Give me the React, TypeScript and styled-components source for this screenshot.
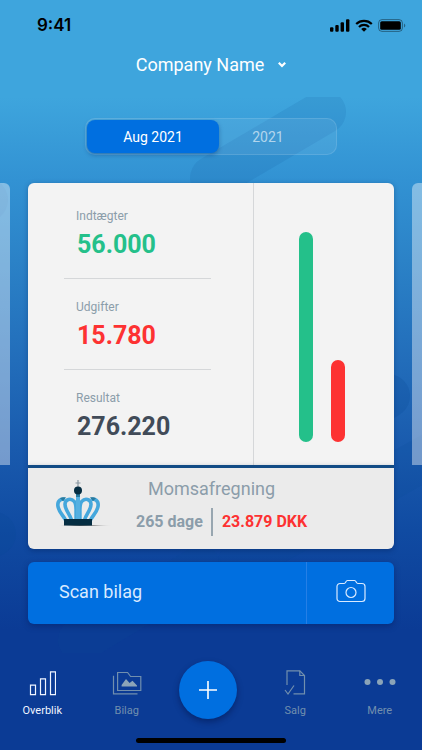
import React, { useState } from 'react';
import styled, { createGlobalStyle } from 'styled-components';

const colors = {
  sky: '#3ea5dd',
  navy: '#0b3b95',
  action: '#006fe0',
  green: '#24c08a',
  red: '#fd3232',
  ink: '#414b58',
  muted: '#8b9daa',
  paper: '#f3f3f3',
};

const GlobalStyle = createGlobalStyle`
  * { box-sizing: border-box; }
  body { margin: 0; background: ${colors.navy}; font-family: Roboto, "Liberation Sans", sans-serif; }
  button { font: inherit; color: inherit; border: 0; padding: 0; background: none; cursor: pointer; }
  a { color: inherit; text-decoration: none; }
  svg { display: block; }
  h2, p, dl, dt, dd { margin: 0; }
`;

const Screen = styled.div`
  position: relative;
  isolation: isolate;
  min-height: 100vh;
  display: flex;
  flex-direction: column;
  overflow: hidden;
  background: linear-gradient(180deg, ${colors.sky} 97px, #3292d3 180px, #2b82c7 260px, #226dba 360px, #195aad 450px, #104ba2 530px, ${colors.navy} 630px);
`;

const Backdrop = styled.svg`
  position: absolute;
  z-index: -1;
  top: 97px;
  left: 0;
  width: 100%;
  height: 556px;
`;

const StatusBar = styled.div`
  display: flex;
  align-items: center;
  justify-content: space-between;
  height: 50px;
  padding: 0 16px 0 37px;
  color: #000;
`;

const Clock = styled.time`
  font: 600 17px/20px Inter, "Liberation Sans", sans-serif;
`;

const StatusIcons = styled.div`
  display: flex;
  align-items: center;
  gap: 5px;
`;

const Header = styled.header`
  display: flex;
  justify-content: center;
  height: 47px;
`;

const CompanyButton = styled.button`
  display: flex;
  align-items: center;
  gap: 14px;
  height: 28px;
  color: #fff;
  font-size: 18px;
`;

const Segments = styled.div`
  align-self: center;
  display: flex;
  width: 252px;
  height: 37px;
  margin: 21px 0 28px;
  border: 1px solid rgba(255, 255, 255, 0.12);
  border-radius: 10px;
  background: rgba(255, 255, 255, 0.07);
`;

const Segment = styled.button<{ $active: boolean }>`
  flex: ${(p) => (p.$active ? '0 0 132px' : '1')};
  margin: 1px;
  padding-right: ${(p) => (p.$active ? '0' : '20px')};
  border-radius: 8px;
  font-size: 14px;
  color: ${(p) => (p.$active ? '#fff' : 'rgba(255,255,255,0.6)')};
  background: ${(p) => (p.$active ? colors.action : 'transparent')};
  box-shadow: ${(p) => (p.$active ? '0 2px 4px rgba(10, 50, 110, 0.4)' : 'none')};
`;

const Carousel = styled.main`
  display: grid;
  grid-template-columns: 10px minmax(0, 1fr) 10px;
  column-gap: 18px;
`;

const Peek = styled.div<{ $side: 'left' | 'right' }>`
  background: rgba(255, 255, 255, 0.4);
  border-radius: ${(p) => (p.$side === 'left' ? '0 6px 0 0' : '6px 0 0 0')};
`;

const Summary = styled.section`
  display: grid;
  grid-template-columns: minmax(0, 226fr) minmax(0, 140fr);
  background: ${colors.paper};
  border-radius: 6px 6px 0 0;
  box-shadow: 0 1px 5px rgba(5, 35, 90, 0.35);
`;

const Metrics = styled.dl`
  padding: 5px 42px 5px 36px;
  border-right: 1px solid #d5d7d9;
`;

const Metric = styled.div`
  display: grid;
  gap: 5px;
  padding: 19px 12px 18px;
  &:not(:last-child) { border-bottom: 1px solid #d5d7d9; }
`;

const MetricLabel = styled.dt`
  font-size: 12px;
  line-height: 18px;
  color: ${colors.muted};
`;

const MetricValue = styled.dd<{ $color: string }>`
  padding-left: 1px;
  font-size: 25px;
  line-height: 30px;
  font-weight: 700;
  color: ${(p) => p.$color};
`;

const Chart = styled.div`
  display: flex;
  align-items: flex-end;
  justify-content: center;
  gap: 18px;
  padding: 0 4px 23px 0;
`;

const Bar = styled.div<{ $color: string }>`
  width: 14px;
  border-radius: 7px;
  background: ${(p) => p.$color};
`;

const VatPanel = styled.section`
  grid-column: 2;
  display: grid;
  grid-template-columns: 86px auto 1fr;
  align-items: start;
  column-gap: 22px;
  height: 84px;
  padding-top: 8px;
  border-top: 3px solid #124b85;
  border-radius: 0 0 6px 6px;
  background: #ebebeb;
  box-shadow: 0 2px 5px rgba(5, 35, 90, 0.4);
`;

const CrownBox = styled.div`
  padding: 4px 0 0 26px;
`;

const VatText = styled.div`
  display: flex;
  flex-direction: column;
`;

const VatTitle = styled.h2`
  padding-left: 12px;
  font-size: 18px;
  line-height: 26px;
  font-weight: 400;
  color: ${colors.muted};
`;

const VatFigures = styled.p`
  display: flex;
  align-items: center;
  margin-top: 6px;
  font-size: 16px;
  font-weight: 700;
  line-height: 28px;
  color: ${colors.muted};
`;

const VatAmount = styled.span`
  margin-left: 8px;
  padding-left: 9px;
  border-left: 2px solid #98a6b0;
  color: ${colors.red};
`;

const ScanBar = styled.button`
  display: grid;
  grid-template-columns: minmax(0, 278fr) minmax(0, 88fr);
  align-items: stretch;
  height: 62px;
  margin: 13px 28px 0;
  border-radius: 6px;
  background: ${colors.action};
  box-shadow: 0 2px 6px rgba(2, 20, 80, 0.4);
  color: #d9eaff;
`;

const ScanLabel = styled.span`
  padding-left: 31px;
  font-size: 18px;
  line-height: 60px;
  text-align: left;
`;

const ScanIcon = styled.span`
  display: grid;
  place-items: center;
  padding-bottom: 4px;
  border-left: 1px solid #257fe6;
`;

const TabBar = styled.nav`
  display: flex;
  align-items: stretch;
  margin-top: auto;
  padding: 24px 0 19px;
`;

const TabPair = styled.div`
  flex: 1;
  display: grid;
  grid-template-columns: 1fr 1fr;
`;

const Tab = styled.a<{ $active?: boolean }>`
  display: flex;
  flex-direction: column;
  align-items: center;
  justify-content: flex-end;
  gap: 6px;
  font-size: 11px;
  line-height: 16px;
  color: ${(p) => (p.$active ? '#f0f5ff' : '#718fae')};
`;

const AddButton = styled.button`
  display: grid;
  place-items: center;
  width: 58px;
  height: 58px;
  margin: 0 16px 0 10px;
  border-radius: 50%;
  color: #fff;
  background: ${colors.action};
  box-shadow: 0 3px 6px rgba(2, 15, 65, 0.45);
`;

const HomeIndicator = styled.div`
  align-self: center;
  width: 150px;
  height: 5px;
  margin-bottom: 7px;
  border-radius: 3px;
  background: #000;
`;

const BackdropShapes = () => (
  <Backdrop viewBox="0 97 422 556" preserveAspectRatio="xMidYMin slice" aria-hidden="true">
    <g stroke="#0a4796" strokeWidth="44" strokeLinecap="round" fill="none">
      <path d="M212 178 324 112" opacity=".11" />
      <path d="M-60 237-14 200" opacity=".1" />
      <path d="M250 480 388 396" opacity=".22" />
      <path d="M-70 570-6 534" opacity=".22" />
      <path d="M80 640 200 568" opacity=".18" />
      <path d="M240 562 440 450" opacity=".12" />
    </g>
  </Backdrop>
);

const SignalIcon = () => (
  <svg width="20" height="13" viewBox="0 0 20 13" aria-hidden="true">
    <rect x="0" y="8.3" width="3.4" height="4.4" rx="1" />
    <rect x="5.3" y="6" width="3.4" height="6.7" rx="1" />
    <rect x="10.6" y="3.3" width="3.4" height="9.4" rx="1" />
    <rect x="16" y="0.3" width="3.4" height="12.4" rx="1" />
  </svg>
);

const WifiIcon = () => (
  <svg width="18" height="13" viewBox="0 0 18 13" aria-hidden="true">
    <g fill="none" stroke="currentColor" strokeWidth="2.2">
      <path d="M1.2 5A11.2 11.2 0 0 1 16.8 5" />
      <path d="M4 8A7 7 0 0 1 14 8" />
    </g>
    <path d="M9 12.8 6.2 10a4 4 0 0 1 5.6 0Z" />
  </svg>
);

const BatteryIcon = () => (
  <svg width="28" height="13" viewBox="0 0 28 13" aria-hidden="true">
    <rect x=".6" y=".6" width="23.8" height="11.8" rx="3.4" fill="none" stroke="#000" strokeOpacity=".4" />
    <rect x="2.2" y="2.2" width="20.6" height="8.6" rx="1.6" />
    <path d="M26 4.4v4.2c1.8-.8 1.8-3.4 0-4.2Z" opacity=".4" />
  </svg>
);

const ChevronIcon = () => (
  <svg width="8" height="8" viewBox="0 0 8 8" aria-hidden="true">
    <path d="M.8 2.800 4 6 7.200 2.800" fill="none" stroke="currentColor" strokeWidth="2.200" />
  </svg>
);

const CrownIcon = () => (
  <svg width="60" height="48" viewBox="0 0 60 48" aria-hidden="true">
    <defs>
      <linearGradient id="crownShadow">
        <stop offset="0" stopColor="#222" stopOpacity="0" />
        <stop offset=".4" stopColor="#222" stopOpacity=".7" />
        <stop offset="1" stopColor="#222" stopOpacity="0" />
      </linearGradient>
    </defs>
    <path d="M4 46 20 45h20l18 1Z" fill="url(#crownShadow)" />
    <g fill="none" stroke="#45a7dc" strokeWidth="3.6">
      <path d="M11.500 40C9 35 3.800 31 3.800 25c0-4.500 3-6.500 7-5.500" />
      <path d="M36.500 40C39 35 44.200 31 44.200 25c0-4.500-3-6.500-7-5.500" />
      <path d="M17.500 40C16 34 10.800 30 11 24c.3-5 6-6.200 9.200-2.600 2 2.400 1.900 5 1.900 9.600v8" />
      <path d="M30.500 40C32 34 37.200 30 37 24c-.3-5-6-6.200-9.200-2.600-2 2.400-1.900 5-1.900 9.600v8" />
    </g>
    <path d="M22 15h4v25h-4z" fill="#55b0e1" />
    <path d="M6 18.200c1.500-1 4-1.200 6-.8l-3 3.500Zm36 0c-1.500-1-4-1.200-6-.8l3 3.500Z" fill="#287a9f" />
    <path d="M22 14h4v3h-4z" fill="#287a9f" />
    <path d="M24 0v7M21.500 3h5" stroke="#8a98a2" strokeWidth="1.200" />
    <circle cx="24" cy="10.500" r="4" fill="#052d42" />
    <path d="M10 39h28v6.500H10z" fill="#052d42" />
  </svg>
);

const CameraIcon = () => (
  <svg width="30" height="24" viewBox="0 0 30 24" fill="none" stroke="currentColor" strokeWidth="1.200" aria-hidden="true">
    <path d="M4 4.500h4.200c1.600 0 1.600-3 3.200-3h7.200c1.600 0 1.600 3 3.200 3H26a3 3 0 0 1 3 3v12a3 3 0 0 1-3 3H4a3 3 0 0 1-3-3v-12a3 3 0 0 1 3-3Z" />
    <circle cx="15" cy="13.500" r="5" />
  </svg>
);

const BarsIcon = () => (
  <svg width="28" height="28" viewBox="0 0 28 28" fill="none" stroke="currentColor" strokeWidth="1.200" aria-hidden="true">
    <path d="M2.500 16.200h5v9.400h-5zM12.500 9.800h5v15.800h-5zM22.500 2.800h5v22.800h-5z" />
  </svg>
);

const FolderIcon = () => (
  <svg width="30" height="28" viewBox="0 0 30 28" fill="none" stroke="currentColor" strokeWidth="1.200" aria-hidden="true">
    <path d="M5.600 21.500v-18h10l3 4h10.200v14Z" />
    <path d="M1.500 6.800v18h24" />
    <path d="M9.600 17.500v-1.500l4.400-6 3.600 4 2.900-2.200 4.500 4.700v1Z" fill="#8ba4b8" stroke="none" />
  </svg>
);

const DocumentIcon = () => (
  <svg width="22" height="28" viewBox="0 0 22 28" fill="none" stroke="currentColor" strokeWidth="1.200" aria-hidden="true">
    <path d="M3 16V1.800h12.800l4.700 4.700v18.300H9.500" />
    <path d="M15.800 1.800v4.700h4.700" />
    <path d="m1 21 3 4 6-8.500" />
  </svg>
);

const MoreIcon = () => (
  <svg width="32" height="28" viewBox="0 0 32 28" fill="#8ba4b8" aria-hidden="true">
    <circle cx="3.500" cy="13" r="3" />
    <circle cx="16" cy="13" r="3" />
    <circle cx="28.500" cy="13" r="3" />
  </svg>
);

const PlusIcon = () => (
  <svg width="20" height="20" viewBox="0 0 20 20" aria-hidden="true">
    <path d="M10 1v18M1 10h18" stroke="currentColor" strokeWidth="1.600" />
  </svg>
);

const metrics = [
  { label: 'Indtægter', value: '56.000', color: colors.green },
  { label: 'Udgifter', value: '15.780', color: colors.red },
  { label: 'Resultat', value: '276.220', color: colors.ink },
];

const bars = [
  { height: 210, color: colors.green },
  { height: 82, color: colors.red },
];

const periods = ['Aug 2021', '2021'];

export default function App() {
  const [period, setPeriod] = useState(periods[0]);

  return (
    <>
      <GlobalStyle />
      <Screen>
        <BackdropShapes />
        <StatusBar>
          <Clock>9:41</Clock>
          <StatusIcons>
            <SignalIcon />
            <WifiIcon />
            <BatteryIcon />
          </StatusIcons>
        </StatusBar>
        <Header>
          <CompanyButton type="button">
            Company Name
            <ChevronIcon />
          </CompanyButton>
        </Header>
        <Segments>
          {periods.map((name) => (
            <Segment key={name} type="button" $active={name === period} aria-pressed={name === period} onClick={() => setPeriod(name)}>
              {name}
            </Segment>
          ))}
        </Segments>
        <Carousel>
          <Peek $side="left" />
          <Summary>
            <Metrics>
              {metrics.map((m) => (
                <Metric key={m.label}>
                  <MetricLabel>{m.label}</MetricLabel>
                  <MetricValue $color={m.color}>{m.value}</MetricValue>
                </Metric>
              ))}
            </Metrics>
            <Chart>
              {bars.map((b) => (
                <Bar key={b.color} $color={b.color} style={{ height: b.height }} />
              ))}
            </Chart>
          </Summary>
          <Peek $side="right" />
          <VatPanel>
            <CrownBox>
              <CrownIcon />
            </CrownBox>
            <VatText>
              <VatTitle>Momsafregning</VatTitle>
              <VatFigures>
                265 dage
                <VatAmount>23.879 DKK</VatAmount>
              </VatFigures>
            </VatText>
          </VatPanel>
        </Carousel>
        <ScanBar type="button">
          <ScanLabel>Scan bilag</ScanLabel>
          <ScanIcon>
            <CameraIcon />
          </ScanIcon>
        </ScanBar>
        <TabBar>
          <TabPair>
            <Tab href="#overblik" $active aria-current="page">
              <BarsIcon />
              Overblik
            </Tab>
            <Tab href="#bilag">
              <FolderIcon />
              Bilag
            </Tab>
          </TabPair>
          <AddButton type="button" aria-label="Tilføj">
            <PlusIcon />
          </AddButton>
          <TabPair>
            <Tab href="#salg">
              <DocumentIcon />
              Salg
            </Tab>
            <Tab href="#mere">
              <MoreIcon />
              Mere
            </Tab>
          </TabPair>
        </TabBar>
        <HomeIndicator />
      </Screen>
    </>
  );
}
